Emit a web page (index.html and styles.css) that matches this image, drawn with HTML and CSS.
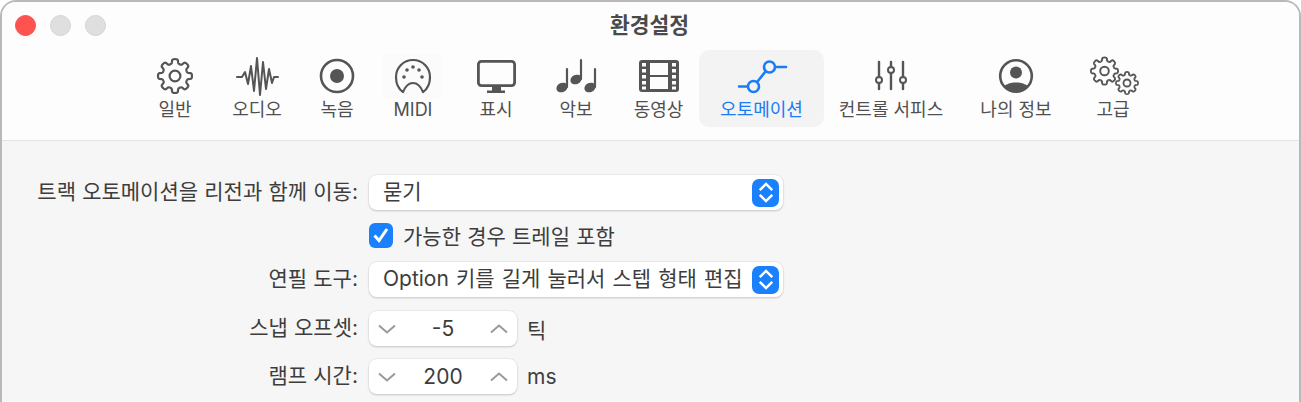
FILE: index.html
```html
<!DOCTYPE html>
<html>
	<head>
		<meta charset="utf-8" />
		<title>환경설정</title>
		<link rel="stylesheet" href="styles.css">
	</head>
	<body>
<svg class="defs" width="0" height="0">
    <defs>
        <path id="tooth" d="M-4.9-11.6C-4-11.9-3.4-12.2-3.2-13L-2.9-15.6C-2.7-16.8-1.6-17-0-17S2.7-16.8 2.9-15.6L3.2-13C3.4-12.2 4-11.9 4.9-11.6"/>
        <g id="gear" fill="none" stroke="currentColor">
            <use href="#tooth"/>
            <use href="#tooth" transform="rotate(45)"/>
            <use href="#tooth" transform="rotate(90)"/>
            <use href="#tooth" transform="rotate(135)"/>
            <use href="#tooth" transform="rotate(180)"/>
            <use href="#tooth" transform="rotate(225)"/>
            <use href="#tooth" transform="rotate(270)"/>
            <use href="#tooth" transform="rotate(315)"/>
            <circle r="5.4"/>
        </g>
    </defs>
</svg>

<div class="window">
    <div class="toolbar">
        <div class="traffic">
            <span class="light red"></span>
            <span class="light"></span>
            <span class="light"></span>
        </div>
        <h1 class="title">환경설정</h1>
        <ul class="tabs">
            <li class="tab">
                <svg class="icon" viewBox="0 0 60 44"><use href="#gear" transform="translate(30 22)" stroke-width="2.2"/></svg>
                <span>일반</span>
            </li>
            <li class="tab">
                <svg class="icon" viewBox="0 0 60 44"><path class="line" stroke-width="2" stroke-linejoin="round" stroke-linecap="round" d="M10 23H15L18 18 21 30 24 12 27 37 30 4 33 41 36 8 39 35 42 15 45 29 47 23H51"/></svg>
                <span>오디오</span>
            </li>
            <li class="tab">
                <svg class="icon" viewBox="0 0 60 44"><circle class="line" cx="30" cy="22" r="16" stroke-width="2.6"/><circle class="dot" cx="30" cy="22" r="7"/></svg>
                <span>녹음</span>
            </li>
            <li class="tab tab-midi">
                <svg class="icon" viewBox="0 0 60 44"><path class="line" stroke-width="2.2" stroke-linejoin="round" d="M20 38C15.500 35 13 29.500 13 23 13 13.500 20.500 6 30 6S47 13.500 47 23C47 29.500 44.500 35 40 38 37.500 32 34 29 30 29S22.500 32 20 38Z"/><circle class="dot" cx="21" cy="23" r="1.800"/><circle class="dot" cx="24" cy="16" r="1.800"/><circle class="dot" cx="30" cy="13" r="1.800"/><circle class="dot" cx="36" cy="16" r="1.800"/><circle class="dot" cx="39" cy="23" r="1.800"/></svg>
                <span>MIDI</span>
            </li>
            <li class="tab">
                <svg class="icon" viewBox="0 0 60 44"><rect class="line" x="12.400" y="7.400" width="36.200" height="24.200" rx="3" stroke-width="2.800"/><path class="dot" d="M26 33H35V36.500H39V39H21V36.500H26Z"/></svg>
                <span>표시</span>
            </li>
            <li class="tab">
                <svg class="icon" viewBox="0 0 60 44"><path class="line" stroke-width="2.200" stroke-linecap="round" d="M21 15V33M35 6V25M49 15V33"/><ellipse class="dot" cx="16" cy="33.500" rx="5.800" ry="4.600" transform="rotate(-25 16 33.500)"/><ellipse class="dot" cx="30" cy="25.500" rx="5.800" ry="4.600" transform="rotate(-25 30 25.500)"/><ellipse class="dot" cx="44" cy="33.500" rx="5.800" ry="4.600" transform="rotate(-25 44 33.500)"/></svg>
                <span>악보</span>
            </li>
            <li class="tab">
                <svg class="icon" viewBox="0 0 60 44"><rect class="dot" x="10" y="6" width="40" height="32" rx="3"/><path class="hole" d="M21 9H39V21H21ZM21 23H39V35H21ZM13 9H17V12.500H13ZM13 15H17V18.500H13ZM13 21H17V24.500H13ZM13 27H17V30.500H13ZM13 32.500H17V35.500H13ZM43 9H47V12.500H43ZM43 15H47V18.500H43ZM43 21H47V24.500H43ZM43 27H47V30.500H43ZM43 32.500H47V35.500H43Z"/></svg>
                <span>동영상</span>
            </li>
            <li class="tab tab-on">
                <svg class="icon" viewBox="0 0 60 44"><path class="line" stroke-width="2.600" stroke-linecap="round" d="M7 32.500H15.500M25.500 27.500L33.500 17.500M44 13H54"/><circle class="line" cx="21.500" cy="32.500" r="5.500" stroke-width="2.600"/><circle class="line" cx="37.500" cy="13" r="5.500" stroke-width="2.600"/></svg>
                <span>오토메이션</span>
            </li>
            <li class="tab">
                <svg class="icon" viewBox="0 0 60 44"><path class="line" stroke-width="2.400" stroke-linecap="round" d="M18 8V23M18 29V35M30 8V13M30 19V35M42 8V23M42 29V35"/><circle class="line" cx="18" cy="26" r="3" stroke-width="2"/><circle class="line" cx="30" cy="16" r="3" stroke-width="2"/><circle class="line" cx="42" cy="26" r="3" stroke-width="2"/></svg>
                <span>컨트롤 서피스</span>
            </li>
            <li class="tab">
                <svg class="icon" viewBox="0 0 60 44"><circle class="line" cx="30" cy="22" r="15.800" stroke-width="2.600"/><circle class="dot" cx="30" cy="18.500" r="6"/><path class="dot" d="M18 32.500C20 30 25 28.500 30 28.500S40 30 42 32.500C39 36 35 37.500 30 37.500S21 36 18 32.500Z"/></svg>
                <span>나의 정보</span>
            </li>
            <li class="tab">
                <svg class="icon" viewBox="0 0 60 44"><use href="#gear" transform="translate(21.500 17) scale(.8)" stroke-width="2.400"/><use href="#gear" transform="translate(44 29) scale(.65)" stroke-width="2.800"/></svg>
                <span>고급</span>
            </li>
        </ul>
    </div>

    <div class="form">
        <label class="name">트랙 오토메이션을 리전과 함께 이동:</label>
        <div class="select">
            <span>묻기</span>
            <b class="arrows"><svg viewBox="0 0 14 20"><path d="M1.500 8L7 2.500 12.500 8M1.500 12L7 17.500 12.500 12"/></svg></b>
        </div>

        <div class="check">
            <b class="box"><svg viewBox="0 0 20 20"><path d="M3.500 10.500L8 15.500 16 4"/></svg></b>
            <span>가능한 경우 트레일 포함</span>
        </div>

        <label class="name">연필 도구:</label>
        <div class="select">
            <span>Option 키를 길게 눌러서 스텝 형태 편집</span>
            <b class="arrows"><svg viewBox="0 0 14 20"><path d="M1.500 8L7 2.500 12.500 8M1.500 12L7 17.500 12.500 12"/></svg></b>
        </div>

        <label class="name">스냅 오프셋:</label>
        <div class="value">
            <div class="stepper">
                <svg viewBox="0 0 18 10"><path d="M1 1.500L9 8.500 17 1.500"/></svg>
                <span>-5</span>
                <svg viewBox="0 0 18 10"><path d="M1 8.500L9 1.500 17 8.500"/></svg>
            </div>
            <span>틱</span>
        </div>

        <label class="name">램프 시간:</label>
        <div class="value">
            <div class="stepper">
                <svg viewBox="0 0 18 10"><path d="M1 1.500L9 8.500 17 1.500"/></svg>
                <span>200</span>
                <svg viewBox="0 0 18 10"><path d="M1 8.500L9 1.500 17 8.500"/></svg>
            </div>
            <span>ms</span>
        </div>
    </div>
</div>
	</body>
</html>
```
FILE: styles.css
```css
* {
    margin: 0;
    padding: 0;
    box-sizing: border-box;
}
html, body {
    height: 402px;
    overflow: hidden;
    background: #fff;
}
body {
    font-family: Inter, "Noto Sans CJK KR", sans-serif;
    color: #3d3d3d;
}
.defs {
    position: absolute;
}
.window {
    height: 420px;
    width: 1301px;
    border: 2px solid #b9b9b9;
    border-bottom: 0;
    border-radius: 16px 16px 0 0;
    background: #f6f6f6;
    overflow: hidden;
}
.toolbar {
    position: relative;
    height: 139px;
    background: #fdfdfd;
    border-bottom: 1px solid #e4e4e4;
    padding-top: 8px;
}
.traffic {
    position: absolute;
    left: 13px;
    top: 13px;
    display: flex;
    gap: 14px;
}
.light {
    width: 21px;
    height: 21px;
    border-radius: 50%;
    background: #dfdfdf;
    border: 1px solid #d2d2d2;
}
.light.red {
    background: #ff5350;
    border-color: #f0504c;
}
.title {
    font-size: 21.5px;
    line-height: 30px;
    font-weight: 700;
    text-align: center;
    color: #4a4a4a;
    padding-right: 2px;
}
.tabs {
    list-style: none;
    display: grid;
    grid-template-columns: 66px 98px 62px 90px 76px 84px 81px 125px 134px 116px 78px;
    margin: 10px 0 0 140px;
}
.tab {
    height: 77px;
    border-radius: 10px;
    display: flex;
    flex-direction: column;
    align-items: center;
    font-size: 18px;
    line-height: 22px;
    color: #505050;
    white-space: nowrap;
}
.icon {
    display: block;
    width: 60px;
    height: 44px;
    margin-top: 4px;
    margin-bottom: 1px;
    color: #555;
    flex: none;
}
.line {
    fill: none;
    stroke: currentColor;
}
.dot {
    fill: currentColor;
}
.hole {
    fill: #fdfdfd;
}
.tab-midi .icon {
    background: #fbfbfb;
}
.tab-on {
    background: #f3f3f3;
    color: #1a7cf6;
}
.tab-on .icon {
    color: #1a7cf6;
}

.form {
    display: grid;
    grid-template-columns: 356px 414px;
    column-gap: 11px;
    align-items: center;
    padding-top: 34px;
    font-size: 21px;
    word-spacing: .3px;
}
.name {
    text-align: right;
    white-space: nowrap;
    margin-top: 13px;
    padding-bottom: 5px;
}
.name:first-child,
.check + .name {
    margin-top: 0;
}
.select {
    height: 35px;
    background: #fff;
    border-radius: 8px;
    box-shadow: 0 0 0 .5px #ddd, 0 1px 2px #bbb;
    display: flex;
    align-items: center;
    justify-content: space-between;
    padding: 0 4px 0 14px;
    white-space: nowrap;
    word-spacing: 1.2px;
}
.select span {
    padding-bottom: 5px;
}
.arrows {
    width: 27px;
    height: 28px;
    border-radius: 7px;
    background: #1a80fb;
    display: flex;
    align-items: center;
    justify-content: center;
}
.arrows svg {
    width: 16px;
    height: 23px;
    fill: none;
    stroke: #fff;
    stroke-width: 2.200;
}
.check {
    grid-column: 2;
    display: flex;
    align-items: center;
    gap: 10px;
    height: 52px;
    padding-bottom: 2px;
}
.box {
    width: 24px;
    height: 25px;
    border-radius: 6px;
    background: #1a80fb;
    display: flex;
    align-items: center;
    justify-content: center;
}
.box svg {
    width: 20px;
    height: 20px;
    fill: none;
    stroke: #fff;
    stroke-width: 3;
}
.value {
    display: flex;
    align-items: center;
    gap: 10px;
    margin-top: 14px;
}
.value:last-child {
    margin-top: 13px;
}
.stepper {
    width: 148px;
    height: 35px;
    background: #fff;
    border-radius: 8px;
    box-shadow: 0 0 0 .5px #ddd, 0 1px 2px #bbb;
    display: flex;
    align-items: center;
    justify-content: space-between;
    padding: 0 9px;
}
.stepper svg {
    width: 18px;
    height: 10px;
    fill: none;
    stroke: #999;
    stroke-width: 2;
}
```
